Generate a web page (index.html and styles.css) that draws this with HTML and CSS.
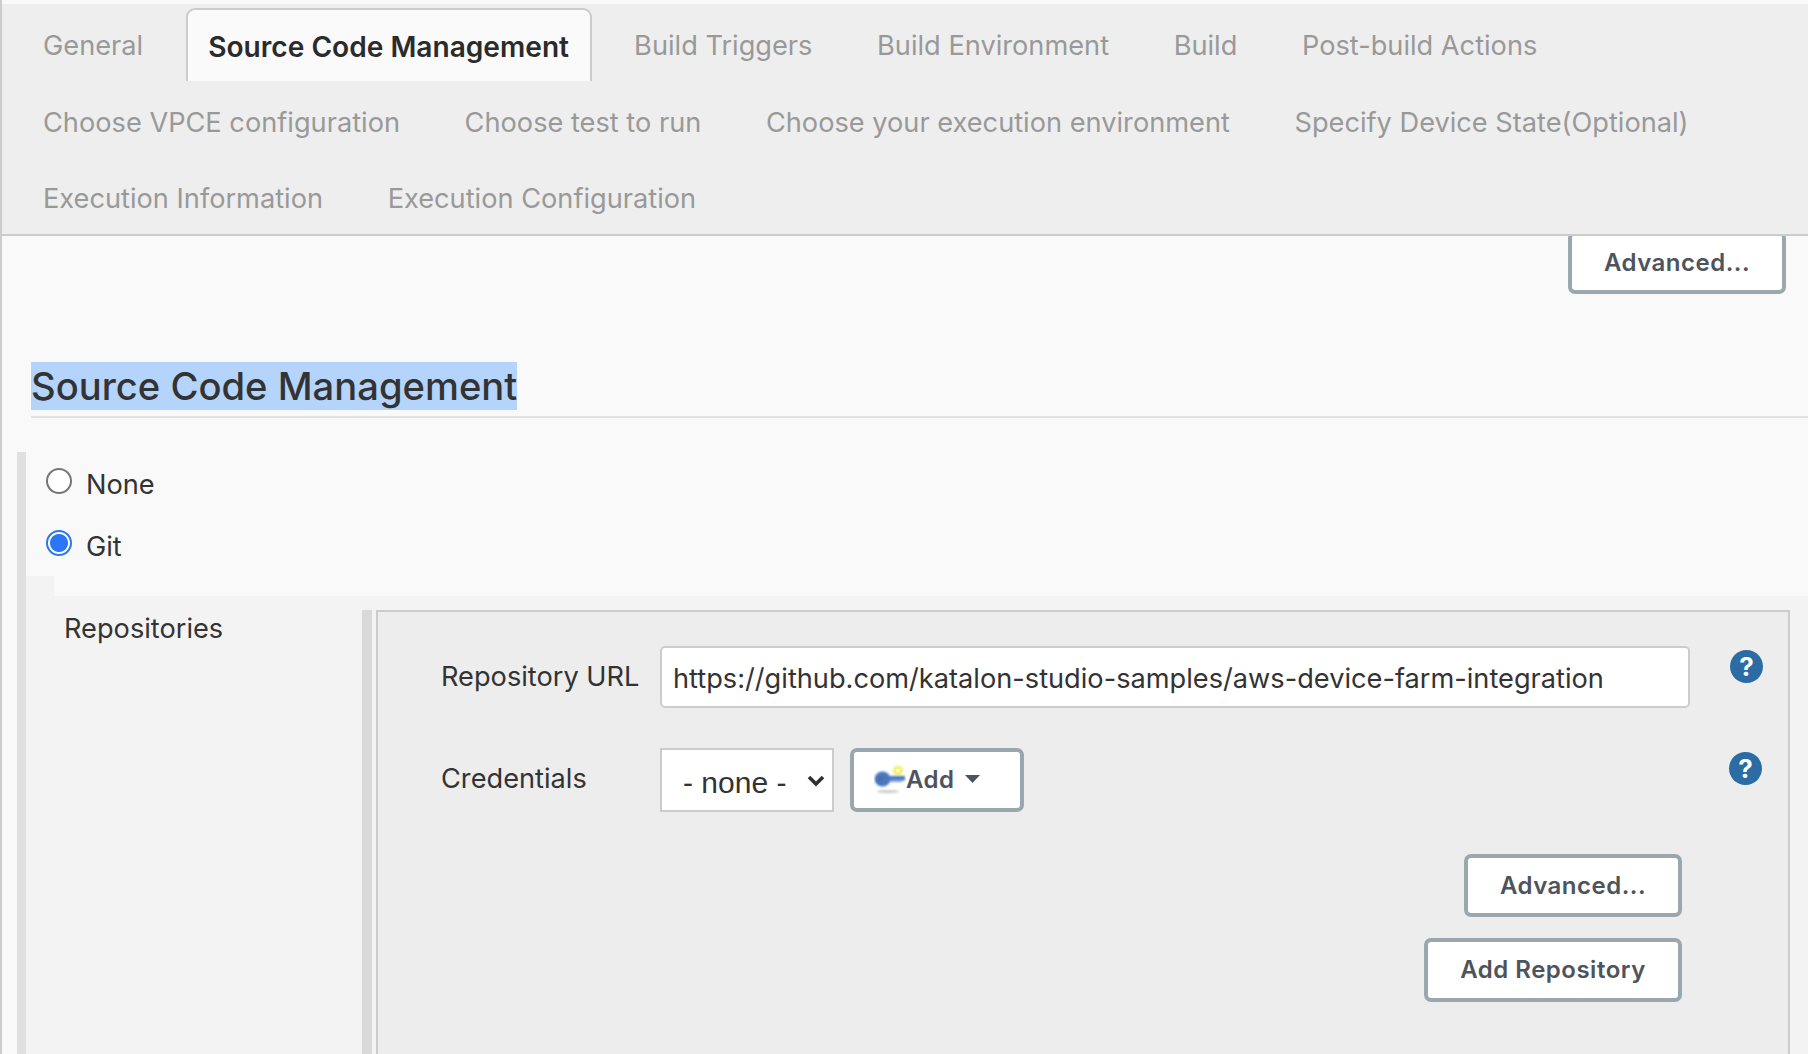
FILE: index.html
```html
<!DOCTYPE html>
<html lang="en">
<head>
<meta charset="utf-8">
<title>Source Code Management</title>
<link rel="stylesheet" href="styles.css">
</head>
<body>
<div class="page">
  <nav class="tabbar">
    <a class="tab">General</a>
    <a class="tab tab-active">Source Code Management</a>
    <a class="tab">Build Triggers</a>
    <a class="tab">Build Environment</a>
    <a class="tab">Build</a>
    <a class="tab">Post-build Actions</a>
    <a class="tab">Choose VPCE configuration</a>
    <a class="tab">Choose test to run</a>
    <a class="tab">Choose your execution environment</a>
    <a class="tab">Specify Device State(Optional)</a>
    <a class="tab">Execution Information</a>
    <a class="tab">Execution Configuration</a>
  </nav>

  <div class="top-actions">
    <button class="btn btn-advanced" type="button">Advanced...</button>
  </div>

  <h2 class="section-title"><span class="selected">Source Code Management</span></h2>

  <section class="scm">
    <label class="radio-row"><input class="radio" type="radio" name="scm"><span class="radio-text">None</span></label>
    <label class="radio-row"><input class="radio" type="radio" name="scm" checked><span class="radio-text">Git</span></label>
    <div class="notch"></div>
    <div class="repo-block">
      <div class="repo-label">Repositories</div>
      <div class="repo-bar"></div>
      <div class="repo-panel">
        <div class="field field-url">
          <label class="field-label">Repository URL</label>
          <input class="text-input" type="text" value="https://github.com/katalon-studio-samples/aws-device-farm-integration">
          <span class="help">?</span>
        </div>
        <div class="field field-cred">
          <label class="field-label">Credentials</label>
          <div class="select-wrap">
            <select class="select"><option>- none -</option></select>
            <svg class="chevron" width="18" height="12" viewBox="0 0 18 12"><path d="M2 2l7 7 7-7" fill="none" stroke="#2f2f2f" stroke-width="3.6"/></svg>
          </div>
          <button class="btn btn-add" type="button">
            <svg class="key" width="32" height="32" viewBox="0 0 32 32">
              <defs>
                <filter id="soft" x="-20%" y="-20%" width="140%" height="140%"><feGaussianBlur stdDeviation="0.8"/></filter>
                <filter id="softer" x="-30%" y="-200%" width="160%" height="500%"><feGaussianBlur stdDeviation="1.2"/></filter>
              </defs>
              <ellipse cx="14" cy="28.5" rx="11" ry="1.6" fill="#cfcfcf" filter="url(#softer)"/>
              <circle cx="24" cy="7.5" r="5" fill="#f7f06a" filter="url(#soft)"/>
              <circle cx="24" cy="7.5" r="2" fill="#fdfbc8"/>
              <g filter="url(#soft)">
                <ellipse cx="8.5" cy="16" rx="8" ry="7.5" fill="#4a77c0"/>
                <rect x="12" y="13" width="19" height="4.5" fill="#4a77c0"/>
                <rect x="16" y="16.5" width="12" height="2.5" fill="#7ea0d6"/>
                <circle cx="6" cy="16" r="2.2" fill="#56688a"/>
              </g>
            </svg>
            <span class="add-text">Add</span>
            <svg class="caret" width="15" height="8" viewBox="0 0 15 8"><path d="M0 0h15L7.5 8z" fill="#4d545d"/></svg>
          </button>
          <span class="help help-cred">?</span>
        </div>
        <div class="panel-actions">
          <button class="btn btn-advanced" type="button">Advanced...</button>
          <button class="btn btn-repo" type="button">Add Repository</button>
        </div>
      </div>
    </div>
  </section>
</div>
</body>
</html>
```
FILE: styles.css
```css
* { box-sizing: border-box; }

html, body {
  margin: 0;
  height: 100%;
  overflow: hidden;
  background: #f9f9f9;
}

body {
  font-family: Inter, "Liberation Sans", sans-serif;
  color: #333;
}

.page {
  height: 1054px;
  border-left: 2px solid #ccc;
  padding-top: 4px;
  overflow: hidden;
  display: flex;
  flex-direction: column;
}

.tabbar {
  position: relative;
  z-index: 2;
  display: flex;
  flex-wrap: wrap;
  gap: 4px 20.6px;
  height: 232px;
  padding: 4px 0 0 19px;
  background: #eee;
  border-bottom: 2px solid #ccc;
  flex: none;
}

.tab {
  height: 72px;
  padding: 3px 22px 0;
  display: flex;
  align-items: center;
  font-size: 27.2px;
  color: #999;
}

.tab-active {
  padding: 2px 20.5px 0;
  height: 73px;
  margin-bottom: -1px;
  background: #fafafa;
  border: 2px solid #ccc;
  border-bottom: 0;
  border-radius: 9px 9px 0 0;
  font-size: 28.1px;
  font-weight: 600;
  color: #2b2b2b;
}

.top-actions {
  display: flex;
  justify-content: flex-end;
  padding-right: 22px;
  margin-top: -5px;
  flex: none;
}

.btn {
  height: 63px;
  background: #fff;
  border: 4px solid #9ba7af;
  border-radius: 7px;
  font-family: inherit;
  font-size: 24px;
  font-weight: 600;
  letter-spacing: 0.5px;
  color: #4d545d;
  padding: 0 0 1px;
}

.btn-advanced { width: 218px; }
.btn-repo { width: 258px; height: 64px; padding-bottom: 2px; }

.section-title {
  margin: 68px 0 0 29px;
  padding-bottom: 6px;
  border-bottom: 2px solid #e2e2e2;
  font-size: 38.2px;
  font-weight: 500;
  line-height: 48px;
  height: 56px;
  color: #333;
  flex: none;
}

.selected {
  display: inline-block;
  background: #b5d4fb;
}

.scm {
  flex: 1;
  margin: 34px 0 0 15px;
  border-left: 9px solid #e0e0e0;
  padding-top: 16px;
  display: flex;
  flex-direction: column;
}

.radio-row {
  display: flex;
  align-items: flex-start;
  gap: 14px;
  height: 62px;
  padding-left: 20px;
  font-size: 27.2px;
  flex: none;
}

.radio {
  appearance: none;
  width: 26px;
  height: 26px;
  margin: 0;
  background: #fff;
  border: 2px solid #767676;
  border-radius: 50%;
  flex: none;
}

.radio:checked {
  border-color: #2a76f6;
  background: radial-gradient(circle, #2a76f6 0 8.5px, #fff 9.5px);
}

.radio-text {
  line-height: 34px;
}

.notch {
  width: 28px;
  height: 20px;
  margin-top: -16px;
  background: #f3f3f3;
  flex: none;
}

.repo-block {
  flex: 1;
  display: flex;
  align-items: stretch;
  background: #f3f3f3;
  padding: 14px 18px 0 0;
}

.repo-label {
  width: 336px;
  padding: 2px 0 0 38px;
  font-size: 27.2px;
  line-height: 34px;
  flex: none;
}

.repo-bar {
  width: 10px;
  background: #d9d9d9;
  margin-right: 4px;
  flex: none;
}

.repo-panel {
  flex: 1;
  background: #ededed;
  border: 2px solid #ccc;
  border-bottom: 0;
  padding-top: 34px;
}

.field {
  display: flex;
  align-items: flex-start;
}

.field-label {
  width: 282px;
  padding-left: 63px;
  font-size: 27.2px;
  line-height: 34px;
  padding-top: 14px;
  flex: none;
  white-space: nowrap;
}

.text-input {
  width: 1030px;
  height: 62px;
  padding: 2px 11px 0;
  background: #fff;
  border: 2px solid #ccc;
  border-radius: 5px;
  font-family: inherit;
  font-size: 27.2px;
  color: #333;
  outline: none;
  flex: none;
}

.help {
  width: 33px;
  height: 33px;
  margin: 4px 0 0 40px;
  border-radius: 50%;
  background: #2a6ca3;
  color: #fff;
  font-size: 26px;
  font-weight: 700;
  line-height: 33px;
  text-align: center;
  flex: none;
}

.help-cred {
  margin-left: 705px;
}

.field-cred {
  margin-top: 40px;
}

.select-wrap {
  position: relative;
  width: 174px;
  height: 64px;
  flex: none;
}

.select {
  appearance: none;
  width: 100%;
  height: 100%;
  padding: 4px 0 0 21px;
  background: #fff;
  border: 2px solid #ccc;
  border-radius: 0;
  font-family: "Liberation Sans", Arial, sans-serif;
  font-size: 30px;
  color: #333;
}

.chevron {
  position: absolute;
  right: 9px;
  top: 27px;
  pointer-events: none;
}

.btn-add {
  width: 174px;
  height: 64px;
  margin-left: 16px;
  padding: 0 0 2px 20px;
  display: flex;
  align-items: center;
  flex: none;
}

.key {
  margin: 0;
  flex: none;
}

.add-text {
  margin: 0 10px 0 0;
}

.caret {
  flex: none;
}

.panel-actions {
  margin: 42px 106px 0 0;
  display: flex;
  flex-direction: column;
  align-items: flex-end;
  gap: 21px;
}
```
